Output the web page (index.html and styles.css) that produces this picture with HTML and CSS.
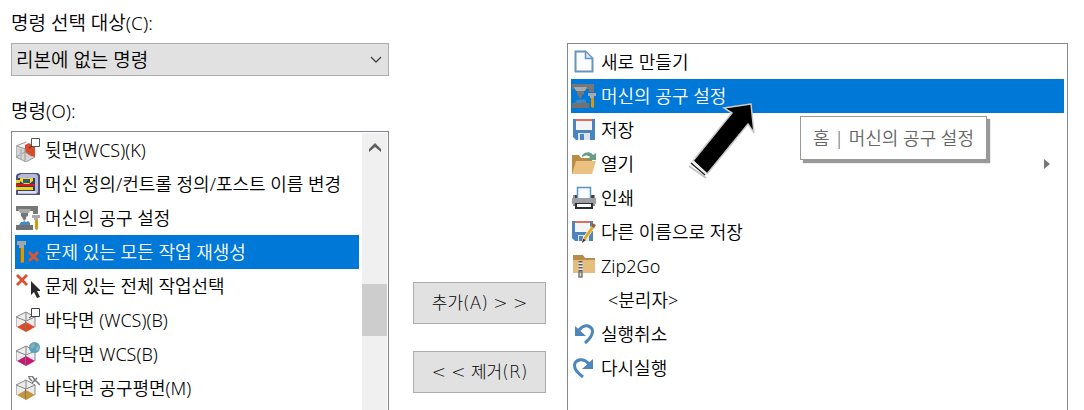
FILE: index.html
```html
<!DOCTYPE html>
<html lang="ko">
<head>
<meta charset="utf-8">
<meta name="viewport" content="width=device-width, initial-scale=1">
<title>명령 사용자 지정</title>
<link rel="stylesheet" href="styles.css">
</head>
<body>
<svg class="sprite" aria-hidden="true">
  <symbol id="cube" viewBox="0 0 24 24">
    <path d="M0 9 10 4l9 5v10l-9 5-10-5z" fill="#ececec"/>
    <path d="M0 9 10 4l9 5-9 4zM0 9v10M19 9v10M10 4v9" fill="none" stroke="#858585"/>
  </symbol>
  <symbol id="machine" viewBox="0 0 24 24">
    <path d="M0 0h22v8h-5V5H0z" fill="#777"/>
    <path d="M2 3h13l-2 4H4z" fill="#a9a9a9"/>
    <path d="M5 7h7v3l-2 1v2l-2 2-2-4-1-1z" fill="#737779"/>
    <path d="M3 19l2-3h2l1-1 2 1 2-1 2 2v2z" fill="#4687c6"/>
    <path d="M0 19h17v5H0z" fill="#717171"/>
    <path d="M16 9h8v3h-2v2h-4v-2h-2z" fill="#aaa"/>
    <path d="M19 14h3v9l-1 1-2-1z" fill="#d39a0d"/>
  </symbol>
  <symbol id="floppy" viewBox="0 0 24 24">
    <path d="M1 1h22v21H4l-3-3z" fill="#4c84bd"/>
    <path d="M4 1h16v11H4z" fill="#f3f5f8"/><path d="M4 1h16v2H4z" fill="#df6e59"/>
    <path d="M6 15h12v7H6z" fill="#dce5ee"/><path d="M8 16h4v6H8z" fill="#4c84bd"/>
  </symbol>
</svg>
<main class="customize">
  <section class="source">
    <label class="label" for="category">명령 선택 대상(C):</label>
    <div class="picker">
      <select id="category" class="picker-select"><option>리본에 없는 명령</option></select>
      <svg class="picker-arrow" viewBox="0 0 12 8" aria-hidden="true"><path d="M1 1l5 5 5-5" fill="none" stroke="#444" stroke-width="1.3"/></svg>
    </div>
    <span class="label label-commands" id="commands-label">명령(O):</span>
    <div class="listbox listbox-source">
      <ul class="items" role="listbox" aria-labelledby="commands-label">
        <li class="item" role="option">
          <svg class="icon" viewBox="0 0 24 24"><path d="M0 8l10-4 9 5v10l-9 5-10-5z" fill="#d6d6d6"/><path d="M1 8l9-4 4 3-5 3z" fill="#f4f4f4"/><path d="M9 7l4-2 6 4v10l-4-1-6-4z" fill="#d84b2c"/><path d="M0 8l10-4M0 8v11l10 5 9-5M0 19l9-5 6 4M1 8l8 3v12" stroke="#999" fill="none"/><path d="M5 11v10" stroke="#bbb" stroke-width="2"/><path d="M15.500 .5h8v8h-8z" fill="#fff" stroke="#555"/><path d="M13 10l3-2" stroke="#333"/></svg>뒷면(WCS)(K)</li>
        <li class="item" role="option">
          <svg class="icon" viewBox="0 0 24 24"><path d="M1 2l3-1h18l2 2v20H0V4z" fill="#50547f"/><path d="M2 4l3-2h15l2 2v16l-2 2H2z" fill="#b6b9d8"/><path d="M2 6h17v13H2z" fill="#383c5c"/><path d="M0 8h4v3H0zm0 7h4v3H0z" fill="#eed31b"/><path d="M4 6h13v3l-4 3H8L4 9z" fill="#f4d925"/><path d="M4 15h13v3H4z" fill="#edd024"/><path d="M7 7h7v4H7z" fill="#315c82"/><path d="M0 12h19v2H0z" fill="#d71924"/><path d="M2 19h18v2H2z" fill="#e0e1ef"/></svg>머신 정의/컨트롤 정의/포스트 이름 변경</li>
        <li class="item" role="option"><svg class="icon"><use href="#machine"/></svg>머신의 공구 설정</li>
        <li class="item item-selected" role="option" aria-selected="true">
          <svg class="icon" viewBox="0 0 24 24"><path d="M1 1h9v4H8v3H3V5H1z" fill="#a5a6a7"/><path d="M4 8h4v14l-2 1-2-1z" fill="#d59a0d"/><path d="M4 8h1v14H4z" fill="#936b0b"/><path d="M13 12l9 9m0-9l-9 9" stroke="#d65735" stroke-width="3"/></svg>문제 있는 모든 작업 재생성</li>
        <li class="item" role="option">
          <svg class="icon" viewBox="0 0 24 24"><path d="M1 1l10 10M11 1L1 11" stroke="#d8502e" stroke-width="2.800"/><path d="M15 7v14l3-3 3 6 3-1-3-6h4z" fill="#292929"/></svg>문제 있는 전체 작업선택</li>
        <li class="item" role="option">
          <svg class="icon" viewBox="0 0 24 24"><use href="#cube"/><path d="M1 19l9-5 9 5-9 5z" fill="#dc4b25"/><path d="M9.500 13v10" stroke="#777"/><path d="M15.500 .5h8v8h-8z" fill="#fff" stroke="#444"/><path d="M13 10l3-2" stroke="#333"/></svg>바닥면 (WCS)(B)</li>
        <li class="item" role="option">
          <svg class="icon" viewBox="0 0 24 24"><use href="#cube"/><path d="M1 19l9-5 9 5-9 5z" fill="#c91873"/><path d="M9.500 13v10" stroke="#777"/><circle cx="18.500" cy="5.500" r="5.500" fill="#5ca0c4"/><path d="M14 4l4-3 1 3-3 3zm6 1l3-1v4l-3 1z" fill="#87b5a4"/></svg>바닥면 WCS(B)</li>
        <li class="item" role="option">
          <svg class="icon" viewBox="0 0 24 24"><use href="#cube"/><path d="M1 19l9-5 9 5-9 5z" fill="#c69439"/><path d="M9.500 13v10" stroke="#777"/><path d="M12 1l4-1 3 4 5 5M16 7l5-5M13 2l3 3" fill="none" stroke="#777" stroke-width="1.500"/></svg>바닥면 공구평면(M)</li>
      </ul>
      <div class="scrollbar" aria-hidden="true">
        <svg class="scroll-up" viewBox="0 0 12 9"><path d="M0 9V6l6-6 6 6v3L6 4z" fill="#606060"/></svg>
        <div class="scroll-thumb"></div>
      </div>
    </div>
  </section>

  <div class="actions">
    <button class="action" type="button">추가(A) &gt; &gt;</button>
    <button class="action" type="button">&lt; &lt; 제거(R)</button>
  </div>

  <section class="listbox listbox-target">
    <ul class="items" role="listbox" aria-label="선택한 명령">
      <li class="item" role="option">
        <svg class="icon" viewBox="0 0 24 24"><path d="M3.500 1.500h10l7 7v13h-17z" fill="#fbfdff" stroke="#6794bd" stroke-width="2"/><path d="M13.500 2v6.500H20" fill="#dce9f4" stroke="#6794bd" stroke-width="1.500"/></svg>새로 만들기</li>
      <li class="item item-selected" role="option" aria-selected="true"><svg class="icon"><use href="#machine"/></svg>머신의 공구 설정
        <span class="tooltip" role="tooltip">홈 | 머신의 공구 설정</span>
        <svg class="pointer" viewBox="0 0 68 78" aria-hidden="true"><path d="M63 3L36 7l8 5L5 60l14 13 41-50 6 9z" fill="#000" stroke="#c9c9c9" stroke-width="1.500"/><path d="M1 65l17 12" stroke="#c4c4c4" stroke-width="2"/><path d="M5 60l14 13" stroke="#eee" stroke-width="1.500"/><path d="M3 62l14 12" stroke="#222" stroke-width="1.500"/></svg>
      </li>
      <li class="item" role="option"><svg class="icon"><use href="#floppy"/></svg>저장</li>
      <li class="item" role="option">
        <svg class="icon" viewBox="0 0 24 24"><path d="M0 3h7l2 3h11v16H0z" fill="#b88d48"/><path d="M4 9h20l-4 13H0z" fill="#eac181"/><path d="M10 3c5-4 9-3 11 0l3-2v7h-9l3-3c-2-2-5-2-8 0z" fill="#689d87"/></svg>열기
        <svg class="submenu" viewBox="0 0 6 10" aria-hidden="true"><path d="M0 0l6 5-6 5z" fill="#777"/></svg></li>
      <li class="item" role="option">
        <svg class="icon" viewBox="0 0 24 24"><path d="M1 9h22v11H1z" fill="#8d9094"/><path d="M3 9h3v4H3zm15 0h4v4h-4z" fill="#3d4247"/><path d="M5.500 1.500h13v12h-13z" fill="#f8fbff" stroke="#5c94bf" stroke-width="1.500"/><path d="M0 12h24v6H0z" fill="#9d9fa3"/><path d="M3 17h18v6H3z" fill="#292e33"/><path d="M5 18h14v3H5z" fill="#fff"/></svg>인쇄</li>
      <li class="item" role="option">
        <svg class="icon" viewBox="0 0 24 24"><path d="M0 1h21v20H3l-3-3z" fill="#4c84bd"/><path d="M3 1h15v11H3z" fill="#f3f5f8"/><path d="M3 1h15v2H3z" fill="#df6e59"/><path d="M6 15h11v6H6z" fill="#dce5ee"/><path d="M7 16h4v5H7z" fill="#4c84bd"/><path d="M20 5l3 2-9 13-4 3 1-5z" fill="#e5aa27" stroke="#fff" stroke-width=".7"/><path d="M20 3l4 2-2 3-3-2z" fill="#925d48"/><path d="M10 23l1-4 3 1z" fill="#333"/></svg>다른 이름으로 저장</li>
      <li class="item" role="option">
        <svg class="icon" viewBox="0 0 24 24"><path d="M1 1h10l2 3h10v14H1z" fill="#b78d48"/><path d="M1 6h22v13H1z" fill="#e5bd7c"/><path d="M8.500 7v12" stroke="#eee" stroke-width="4"/><path d="M8.500 7v12" stroke="#555" stroke-width="4" stroke-dasharray="1.500 1.500"/><path d="M7 18h3v5H7z" fill="#ddd" stroke="#777" stroke-width="1.500"/></svg>Zip2Go</li>
      <li class="item item-separator" role="option">&lt;분리자&gt;</li>
      <li class="item" role="option">
        <svg class="icon" viewBox="0 0 24 24"><path d="M7 8c4-5 10-6 13-1 2 5-1 9-7 14" fill="none" stroke="#4b86bd" stroke-width="3"/><path d="M3 4v10h11z" fill="#4b86bd"/></svg>실행취소</li>
      <li class="item" role="option">
        <svg class="icon" viewBox="0 0 24 24"><path d="M17 8C13 3 6 2 3 7c-2 5 1 9 8 14" fill="none" stroke="#4b86bd" stroke-width="3"/><path d="M21 3v10H10z" fill="#4b86bd"/></svg>다시실행</li>
    </ul>
  </section>
</main>
</body>
</html>
```
FILE: styles.css
```css
* { box-sizing: border-box; }

body {
  margin: 0;
  background: #fff;
  color: #000;
  font: 350 18px/24px "Noto Sans", "Noto Sans CJK KR", sans-serif;
}

.sprite { position: absolute; width: 0; height: 0; }

.customize {
  display: grid;
  grid-template-columns: minmax(0, 378fr) auto minmax(0, 501fr);
  height: 100vh;
  overflow: hidden;
  padding: 0 16px 0 11px;
}

.source {
  display: flex;
  flex-direction: column;
  min-height: 0;
  padding-top: 11px;
}

.label { flex: none; display: block; font-size: 19px; }
.label-commands { margin: 23px 0 8px; }

.picker {
  flex: none;
  display: grid;
  align-items: center;
  margin-top: 8px;
}

.picker-select,
.picker-arrow { grid-area: 1 / 1; }

.picker-select {
  width: 100%;
  height: 33px;
  padding: 0 32px 0 4px;
  appearance: none;
  border: 1px solid #adadad;
  border-radius: 0;
  background: #e1e1e1;
  color: #000;
  font: inherit;
  font-size: 19px;
}

.picker-arrow {
  justify-self: end;
  width: 12px;
  height: 8px;
  margin-right: 7px;
  pointer-events: none;
}

.listbox {
  display: flex;
  min-height: 0;
  border: 1px solid #828790;
  border-bottom: 0;
}

.listbox-source { flex: 1; padding: 1px 1px 0 3px; }
.listbox-target { margin-top: 43px; padding: 1px 3px 0; }

.items {
  flex: 1;
  min-width: 0;
  margin: 0;
  padding: 0;
  list-style: none;
}

.item {
  position: relative;
  display: flex;
  align-items: center;
  gap: 5px;
  height: 34px;
  padding: 0 1px;
  white-space: nowrap;
}

.item-selected { background: #0078d7; color: #fff; }
.item-separator { padding-left: 37px; }

.icon { flex: none; width: 24px; height: 24px; }

.scrollbar {
  flex: none;
  display: flex;
  flex-direction: column;
  align-items: center;
  width: 25px;
  margin-left: 3px;
  padding-top: 10px;
  background: #f0f0f0;
}

.scroll-up { flex: none; width: 12px; height: 9px; }

.scroll-thumb {
  flex: none;
  width: 100%;
  height: 52px;
  margin-top: 132px;
  background: #cdcdcd;
}

.actions {
  display: flex;
  flex-direction: column;
  gap: 27px;
  margin: 282px 21px 0 24px;
}

.action {
  width: 133px;
  height: 42px;
  padding: 0;
  border: 1px solid #adadad;
  background: #e1e1e1;
  color: #000;
  font: 300 17px/24px "DejaVu Sans", "Noto Sans CJK KR", sans-serif;
}

.submenu { width: 6px; height: 10px; margin-left: auto; margin-right: 13px; }

.tooltip {
  position: absolute;
  z-index: 1;
  top: 37px;
  right: 77px;
  padding: 9px 12px;
  border: 1px solid #999;
  background: #fff;
  box-shadow: 3px 3px 1px #999;
  color: #666;
}

.pointer {
  position: absolute;
  z-index: 2;
  top: 22px;
  left: 117px;
  width: 68px;
  height: 78px;
}
```
